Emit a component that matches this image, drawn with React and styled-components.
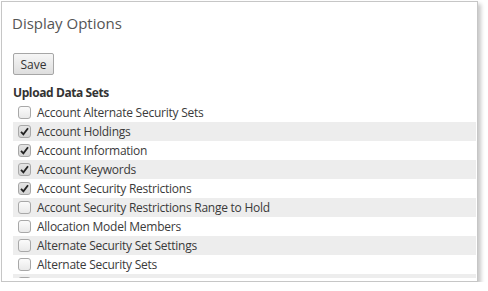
import React from "react";
import styled, { createGlobalStyle } from "styled-components";

const GlobalStyle = createGlobalStyle`
    body {
        margin: 0;
        background: #ffffff;
        font-family: "Open Sans", "Liberation Sans", sans-serif;
    }
`;

const Page = styled.div`
    padding: 1px 0 0 1px;
`;

const Panel = styled.div`
    width: 475px;
    height: 279px;
    border: 1px solid #c6c6c6;
    box-shadow: 3px 3px 4px rgba(0, 0, 0, 0.22);
    background: #ffffff;
    display: flex;
    flex-direction: column;
    overflow: hidden;
`;

const Title = styled.h2`
    margin: 0;
    padding: 10px 0 0 10px;
    font-size: 15px;
    line-height: 22px;
    font-weight: 400;
    color: #555555;
`;

const Body = styled.div`
    padding: 19px 1px 0 11px;
    display: flex;
    flex-direction: column;
    min-height: 0;
    flex: 1;
`;

const SaveButton = styled.button`
    align-self: flex-start;
    width: 41px;
    height: 22px;
    padding: 0;
    border: 1px solid #a6a6a6;
    border-radius: 2px;
    background: linear-gradient(#f6f6f6, #dedede);
    font-family: "Open Sans", "Liberation Sans", sans-serif;
    font-size: 12px;
    color: #333333;
`;

const SectionTitle = styled.div`
    margin-top: 8px;
    font-size: 12px;
    letter-spacing: -0.4px;
    line-height: 19px;
    font-weight: 700;
    color: #333333;
`;

const List = styled.div`
    margin-top: 1px;
    flex: 1;
    min-height: 0;
    overflow: hidden;
    margin-bottom: 3px;
`;

const Row = styled.div`
    height: 19px;
    display: flex;
    align-items: center;
    gap: 6px;
    padding-left: 5px;
    background: ${props => props.striped ? "#ededed" : "transparent"};
    font-size: 12px;
    letter-spacing: -0.25px;
    line-height: 19px;
    color: #3a3a3a;
`;

const Box = styled.span`
    width: 11px;
    height: 11px;
    border: 1px solid #a8a8a8;
    border-radius: 3px;
    background: ${props => props.checked ? "linear-gradient(#e4e4e4, #d4d4d4)" : "linear-gradient(#fbfbfb, #e9e9e9)"};
    display: flex;
    align-items: center;
    justify-content: center;
    flex-shrink: 0;
`;

// last row is scrolled mostly out of view; only its box edge shows
const items = [
    { label: "Account Alternate Security Sets", checked: false },
    { label: "Account Holdings", checked: true },
    { label: "Account Information", checked: true },
    { label: "Account Keywords", checked: true },
    { label: "Account Security Restrictions", checked: true },
    { label: "Account Security Restrictions Range to Hold", checked: false },
    { label: "Allocation Model Members", checked: false },
    { label: "Alternate Security Set Settings", checked: false },
    { label: "Alternate Security Sets", checked: false },
    { label: "", checked: false },
];

function Check()
{
    return (
        <svg width="9" height="9" viewBox="0 0 9 9">
            <path d="M1 4.8 L3.4 7.4 L8 1.2" fill="none" stroke="#222" strokeWidth="1.8" />
        </svg>
    );
}

function App()
{
    return (
        <Page>
            <GlobalStyle />
            <Panel>
                <Title>Display Options</Title>
                <Body>
                    <SaveButton>Save</SaveButton>
                    <SectionTitle>Upload Data Sets</SectionTitle>
                    <List>
                        {items.map((item, i) => (
                            <Row key={i} striped={i % 2 === 1}>
                                <Box checked={item.checked}>{item.checked && <Check />}</Box>
                                {item.label}
                            </Row>
                        ))}
                    </List>
                </Body>
            </Panel>
        </Page>
    );
}

export default App;
